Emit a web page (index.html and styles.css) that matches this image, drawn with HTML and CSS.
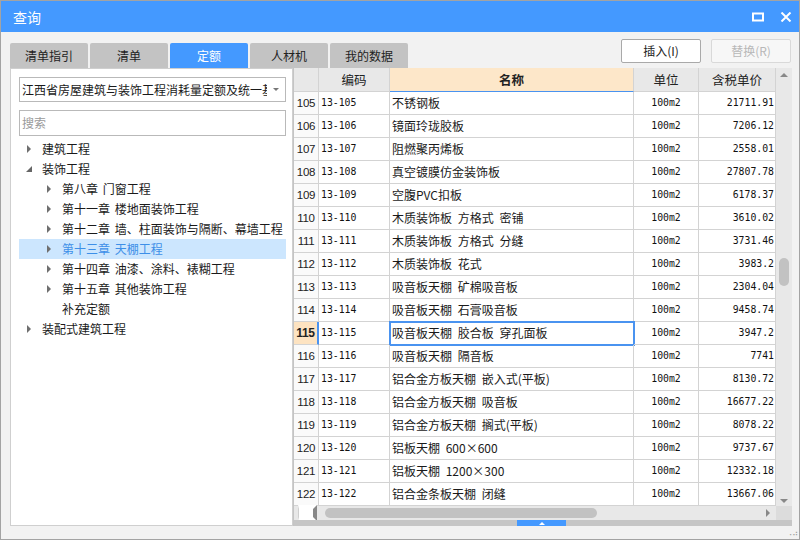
FILE: index.html
```html
<!DOCTYPE html>
<html lang="zh">
<head>
<meta charset="utf-8">
<link rel="stylesheet" href="styles.css">
</head>
<body>
<div class="window">
  <div class="titlebar">
    <span class="title">查询</span>
    <div class="win-btns">
      <svg width="12" height="10" viewBox="0 0 12 10"><rect x="1" y="1.5" width="10" height="7" fill="none" stroke="#fff" stroke-width="2"/></svg>
      <svg width="12" height="10" viewBox="0 0 12 10"><path d="M1.5 0.5 L10.5 9.5 M10.5 0.5 L1.5 9.5" stroke="#fff" stroke-width="2"/></svg>
    </div>
  </div>
  <div class="toolbar">
    <div class="tabs">
      <div class="tab">清单指引</div>
      <div class="tab">清单</div>
      <div class="tab active">定额</div>
      <div class="tab">人材机</div>
      <div class="tab">我的数据</div>
    </div>
    <div class="actions">
      <div class="btn">插入(I)</div>
      <div class="btn disabled">替换(R)</div>
    </div>
  </div>
  <div class="main">
    <div class="left">
      <div class="combo"><span class="combo-text">江西省房屋建筑与装饰工程消耗量定额及统一基价表</span><span class="combo-arrow"></span></div>
      <div class="search">搜索</div>
      <div class="tree">
        <div class="node l0"><span class="arr"></span>建筑工程</div>
        <div class="node l0"><span class="arr open"></span>装饰工程</div>
        <div class="node l1"><span class="arr"></span>第八章 门窗工程</div>
        <div class="node l1"><span class="arr"></span>第十一章 楼地面装饰工程</div>
        <div class="node l1"><span class="arr"></span>第十二章 墙、柱面装饰与隔断、幕墙工程</div>
        <div class="node l1 hl"><span class="arr"></span>第十三章 天棚工程</div>
        <div class="node l1"><span class="arr"></span>第十四章 油漆、涂料、裱糊工程</div>
        <div class="node l1"><span class="arr"></span>第十五章 其他装饰工程</div>
        <div class="node l1"><span class="arr none"></span>补充定额</div>
        <div class="node l0"><span class="arr"></span>装配式建筑工程</div>
      </div>
    </div>
    <div class="gridpanel">
      <div class="grid">
        <div class="row head">
          <div class="c num"></div>
          <div class="c ctr">编码</div>
          <div class="c ctr selcol">名称</div>
          <div class="c ctr">单位</div>
          <div class="c ctr">含税单价</div>
        </div>
        <div class="row"><div class="c num">105</div><div class="c code">13-105</div><div class="c name">不锈钢板</div><div class="c unit">100m2</div><div class="c price">21711.91</div></div>
        <div class="row"><div class="c num">106</div><div class="c code">13-106</div><div class="c name">镜面玲珑胶板</div><div class="c unit">100m2</div><div class="c price">7206.12</div></div>
        <div class="row"><div class="c num">107</div><div class="c code">13-107</div><div class="c name">阻燃聚丙烯板</div><div class="c unit">100m2</div><div class="c price">2558.01</div></div>
        <div class="row"><div class="c num">108</div><div class="c code">13-108</div><div class="c name">真空镀膜仿金装饰板</div><div class="c unit">100m2</div><div class="c price">27807.78</div></div>
        <div class="row"><div class="c num">109</div><div class="c code">13-109</div><div class="c name">空腹PVC扣板</div><div class="c unit">100m2</div><div class="c price">6178.37</div></div>
        <div class="row"><div class="c num">110</div><div class="c code">13-110</div><div class="c name">木质装饰板 方格式 密铺</div><div class="c unit">100m2</div><div class="c price">3610.02</div></div>
        <div class="row"><div class="c num">111</div><div class="c code">13-111</div><div class="c name">木质装饰板 方格式 分缝</div><div class="c unit">100m2</div><div class="c price">3731.46</div></div>
        <div class="row"><div class="c num">112</div><div class="c code">13-112</div><div class="c name">木质装饰板 花式</div><div class="c unit">100m2</div><div class="c price">3983.2</div></div>
        <div class="row"><div class="c num">113</div><div class="c code">13-113</div><div class="c name">吸音板天棚 矿棉吸音板</div><div class="c unit">100m2</div><div class="c price">2304.04</div></div>
        <div class="row"><div class="c num">114</div><div class="c code">13-114</div><div class="c name">吸音板天棚 石膏吸音板</div><div class="c unit">100m2</div><div class="c price">9458.74</div></div>
        <div class="row"><div class="c num selrow">115</div><div class="c code">13-115</div><div class="c name selcell">吸音板天棚 胶合板 穿孔面板</div><div class="c unit">100m2</div><div class="c price">3947.2</div></div>
        <div class="row"><div class="c num">116</div><div class="c code">13-116</div><div class="c name">吸音板天棚 隔音板</div><div class="c unit">100m2</div><div class="c price">7741</div></div>
        <div class="row"><div class="c num">117</div><div class="c code">13-117</div><div class="c name">铝合金方板天棚 嵌入式(平板)</div><div class="c unit">100m2</div><div class="c price">8130.72</div></div>
        <div class="row"><div class="c num">118</div><div class="c code">13-118</div><div class="c name">铝合金方板天棚 吸音板</div><div class="c unit">100m2</div><div class="c price">16677.22</div></div>
        <div class="row"><div class="c num">119</div><div class="c code">13-119</div><div class="c name">铝合金方板天棚 搁式(平板)</div><div class="c unit">100m2</div><div class="c price">8078.22</div></div>
        <div class="row"><div class="c num">120</div><div class="c code">13-120</div><div class="c name">铝板天棚 600×600</div><div class="c unit">100m2</div><div class="c price">9737.67</div></div>
        <div class="row"><div class="c num">121</div><div class="c code">13-121</div><div class="c name">铝板天棚 1200×300</div><div class="c unit">100m2</div><div class="c price">12332.18</div></div>
        <div class="row"><div class="c num">122</div><div class="c code">13-122</div><div class="c name">铝合金条板天棚 闭缝</div><div class="c unit">100m2</div><div class="c price">13667.06</div></div>
      </div>
      <div class="vscroll">
        <span class="tri up"></span>
        <div class="vtrack"><div class="vthumb"></div></div>
        <span class="tri down"></span>
      </div>
      <div class="hscroll">
        <span class="tri left"></span>
        <div class="htrack"><div class="hthumb"></div></div>
        <span class="tri right"></span>
      </div>
      <div class="corner"></div>
      <div class="splitter"><div class="grip"><span class="tri tiny"></span></div></div>
    </div>
  </div>
  <div class="footer"><span class="resize">⠠⠴</span></div>
</div>
</body>
</html>
```
FILE: styles.css
```css
* { box-sizing: border-box; }
html, body { margin: 0; padding: 0; }
body {
  font-family: "Noto Sans CJK SC", "Noto Sans", sans-serif;
  font-size: 12px;
  color: #1a1a1a;
  background: #ffffff;
}
.window {
  width: 800px;
  height: 540px;
  border: 1px solid #a3a3a3;
  background: #f2f2f2;
  display: flex;
  flex-direction: column;
}
.titlebar {
  height: 31px;
  background: #4499ff;
  display: flex;
  align-items: center;
  justify-content: space-between;
  padding: 0 7px 0 12px;
  flex: none;
}
.title { color: #fff; font-size: 14px; line-height: 20px; }
.win-btns { display: flex; gap: 16px; align-items: center; }
.win-btns svg { display: block; }

.toolbar {
  height: 36px;
  flex: none;
  display: flex;
  justify-content: space-between;
  padding: 0 8px 0 9px;
}
.tabs { display: flex; gap: 2px; align-self: flex-end; }
.tab {
  width: 78px;
  height: 25px;
  background: #c3c3c3;
  border-radius: 2px 2px 0 0;
  text-align: center;
  line-height: 25px;
  font-size: 12px;
  color: #222;
}
.tab.active { background: #4499ff; color: #fff; }
.actions { display: flex; gap: 10px; margin-top: 7px; }
.btn {
  width: 80px;
  height: 24px;
  background: #fff;
  border: 1px solid #a9a9a9;
  border-radius: 2px;
  text-align: center;
  line-height: 22px;
  font-size: 12px;
  color: #222;
}
.btn.disabled { background: #f7f7f7; border-color: #d9d9d9; color: #b8b8b8; }

.main {
  height: 458px;
  flex: none;
  display: flex;
  padding: 0 7px 0 9px;
}
.left {
  width: 283px;
  flex: none;
  background: #fff;
  border: 1px solid #cfcfcf;
  padding: 8px 6px 0 8px;
}
.combo {
  height: 25px;
  border: 1px solid #b9b9b9;
  display: flex;
  align-items: center;
  padding: 0 6px 0 2px;
  gap: 6px;
}
.combo-text {
  flex: 1;
  overflow: hidden;
  white-space: nowrap;
  font-size: 12px;
  line-height: 23px;
}
.combo-arrow {
  width: 0; height: 0;
  border-left: 3px solid transparent;
  border-right: 3px solid transparent;
  border-top: 3px solid #777;
  flex: none;
}
.search {
  margin-top: 8px;
  height: 26px;
  border: 1px solid #b9b9b9;
  color: #9a9a9a;
  line-height: 24px;
  padding-left: 2px;
  font-size: 12px;
}
.tree { margin-top: 3px; }
.node {
  height: 20px;
  line-height: 20px;
  display: flex;
  align-items: center;
  font-size: 12px;
  white-space: pre;
  word-spacing: 2px;
}
.node.l0 { padding-left: 7px; }
.node.l1 { padding-left: 27px; }
.node.hl { background: #cce6fe; color: #3d8fe8; }
.arr {
  width: 16px;
  height: 8px;
  flex: none;
  position: relative;
}
.arr::before {
  content: "";
  position: absolute;
  left: 1px; top: 0;
  border-left: 4px solid #6f6f6f;
  border-top: 4px solid transparent;
  border-bottom: 4px solid transparent;
}
.arr.open::before {
  left: 0; top: 1px;
  border-left: 6px solid transparent;
  border-top: 0;
  border-bottom: 6px solid #666;
}
.arr.none::before { display: none; }

.gridpanel {
  width: 499px;
  flex: none;
  border-left: 1px solid #c4c4c4;
  display: grid;
  grid-template-columns: 482px 16px;
  grid-template-rows: 438px 14px 6px;
  background: #fff;
}
.grid { overflow: hidden; background: #fff; }
.row {
  display: grid;
  grid-template-columns: 25px 71px 244px 65px 77px;
  height: 23px;
}
.row.head { height: 24px; background: #e8e8e8; }
.c {
  border-right: 1px solid #d3d3d3;
  border-bottom: 1px solid #d3d3d3;
  line-height: 22px;
  white-space: pre;
  overflow: hidden;
}
.head .c { line-height: 23px; font-size: 12.5px; color: #222; }
.ctr { text-align: center; }
.selcol { background: #fde7c9; font-weight: bold; border-bottom-color: #4a93f0; }
.num {
  font-family: "Liberation Sans", sans-serif;
  font-size: 11.5px;
  text-align: center;
  background: #fafafa;
  color: #222;
  letter-spacing: -0.3px;
}
.head .num { background: #e8e8e8; }
.num.selrow {
  background: #fde3c1;
  font-weight: bold;
  font-size: 12px;
  border-right: 2px solid #4a93f0;
}
.code, .unit, .price {
  font-family: "DejaVu Sans Mono", "Liberation Mono", monospace;
  font-size: 9.8px;
  color: #111;
}
.code { padding-left: 2px; }
.unit { text-align: center; }
.price { text-align: right; padding-right: 1px; }
.name { padding-left: 2px; font-size: 12px; word-spacing: 3px; }
.selcell { outline: 2px solid #4a93f0; outline-offset: -1px; }

.vscroll {
  background: #e8e8e8;
  display: flex;
  flex-direction: column;
  align-items: center;
  padding: 5px 0 3px;
}
.vtrack { flex: 1; width: 100%; padding-top: 181px; display: flex; justify-content: center; }
.vthumb { width: 10px; height: 28px; background: #c2c2c2; border-radius: 5px; }
.hscroll {
  background: #e8e8e8;
  display: flex;
  align-items: center;
  padding: 0 6px 0 4px;
}
.htrack { flex: 1; padding-left: 8px; display: flex; align-items: center; }
.hthumb { width: 272px; height: 10px; background: #c2c2c2; border-radius: 5px; }
.corner { background: #dcdcdc; }
.splitter {
  grid-column: 1 / 3;
  background: #c6c6c6;
  display: flex;
  padding-left: 223px;
}
.grip {
  width: 49px;
  height: 6px;
  background: #4499ff;
  display: flex;
  justify-content: center;
  align-items: center;
}
.tri { width: 0; height: 0; flex: none; display: block; }
.tri.up { border-left: 4px solid transparent; border-right: 4px solid transparent; border-bottom: 4px solid #888; }
.tri.down { border-left: 4px solid transparent; border-right: 4px solid transparent; border-top: 4px solid #888; }
.tri.left { border-top: 4px solid transparent; border-bottom: 4px solid transparent; border-right: 4px solid #888; }
.tri.right { border-top: 4px solid transparent; border-bottom: 4px solid transparent; border-left: 4px solid #888; }
.tri.tiny { border-left: 3px solid transparent; border-right: 3px solid transparent; border-bottom: 3px solid #fff; }

.footer {
  flex: 1;
  display: flex;
  justify-content: flex-end;
  align-items: flex-end;
}
.resize { color: #a0a0a0; font-size: 8px; line-height: 8px; padding: 0 1px 1px 0; font-family: "DejaVu Sans", sans-serif; }
```
